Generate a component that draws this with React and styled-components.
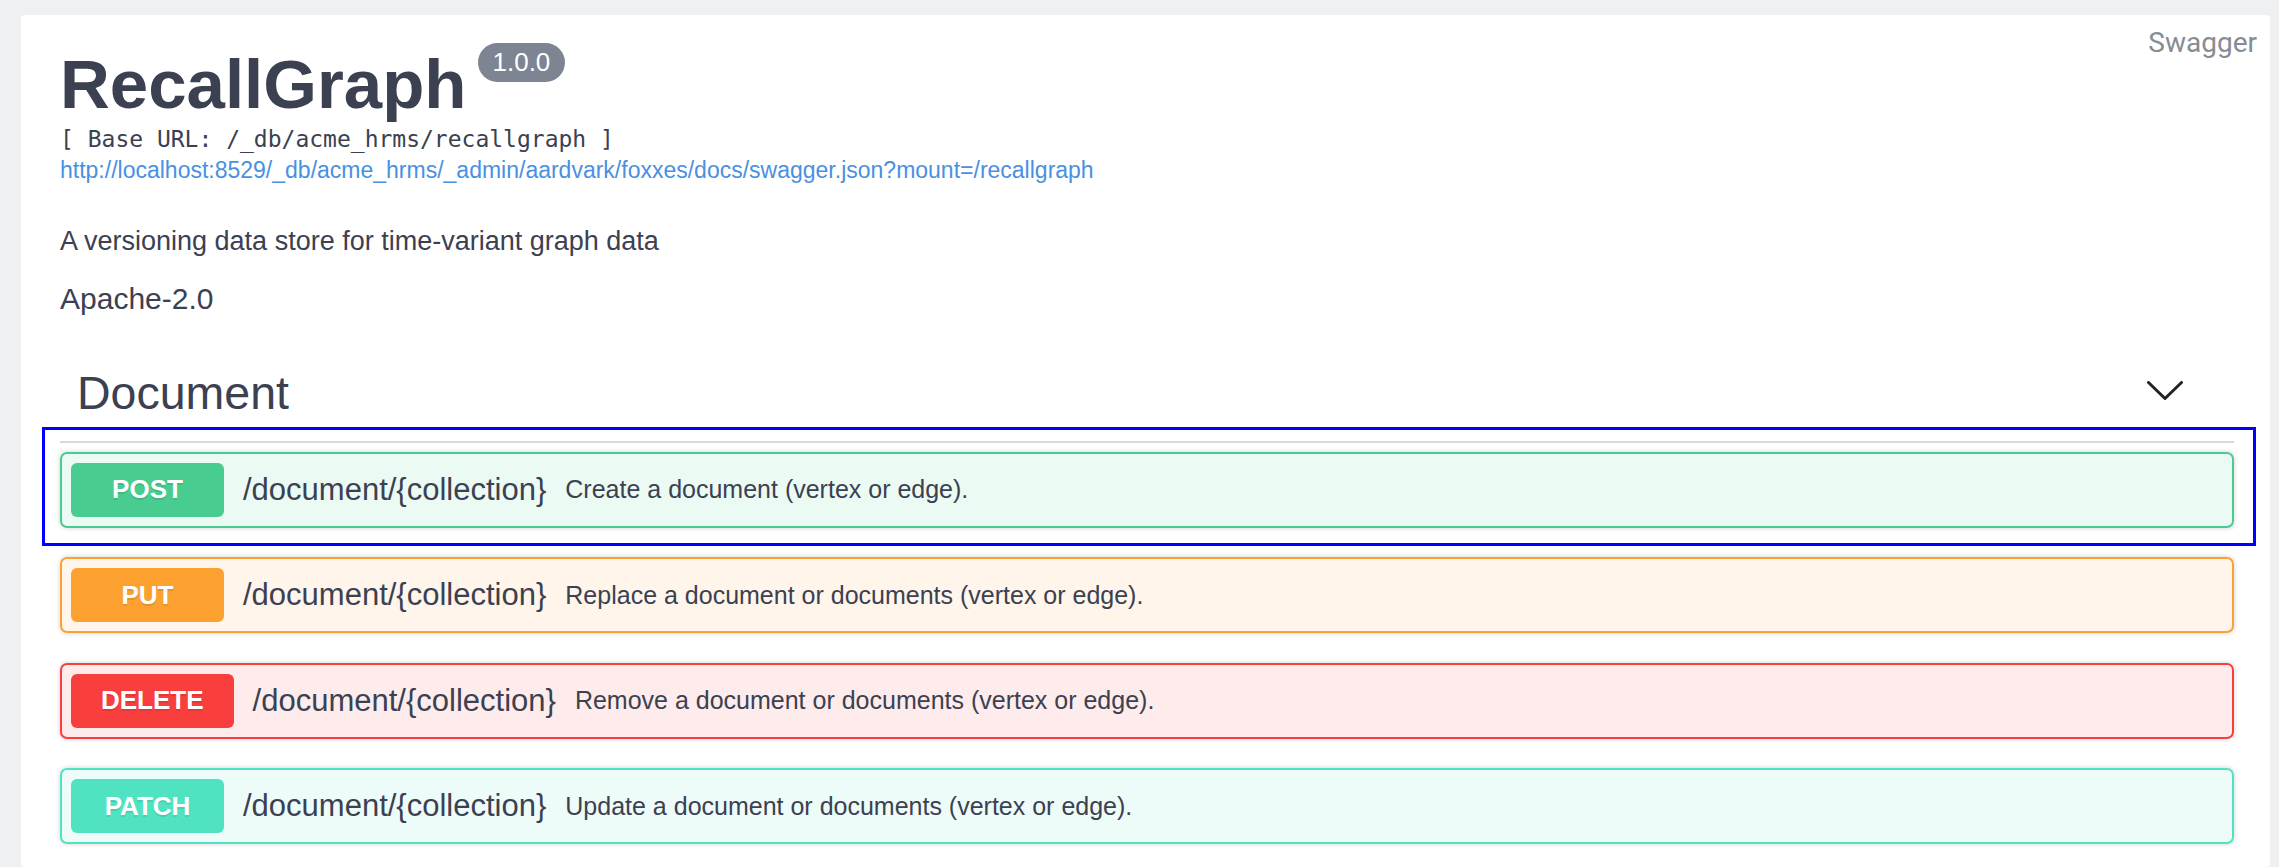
import React from 'react';
import styled, {createGlobalStyle} from 'styled-components';

const GlobalStyle = createGlobalStyle`
    html, body {
        margin: 0;
        padding: 0;
        background: #eff0f2;
        overflow: hidden;
    }
    * {
        box-sizing: border-box;
    }
`;

const ops = [
    {method: 'POST', color: '#49cc90', path: '/document/{collection}', summary: 'Create a document (vertex or edge).'},
    {method: 'PUT', color: '#fca130', path: '/document/{collection}', summary: 'Replace a document or documents (vertex or edge).'},
    {method: 'DELETE', color: '#f93e3e', path: '/document/{collection}', summary: 'Remove a document or documents (vertex or edge).'},
    {method: 'PATCH', color: '#50e3c2', path: '/document/{collection}', summary: 'Update a document or documents (vertex or edge).'},
];

const Page = styled.div`
    padding: 15px 9px 0 21px;
    font-family: "Liberation Sans", Arial, sans-serif;
    color: #3b4151;
`;

const Card = styled.div`
    background: #fff;
    border-radius: 4px;
    min-height: calc(100vh - 15px);
    padding: 0 36px 0 39px;
`;

const Header = styled.div`
    display: flex;
    justify-content: space-between;
    align-items: flex-start;
`;

const Info = styled.div`
    margin-top: 28px;
    display: flex;
    flex-direction: column;
`;

const TitleRow = styled.div`
    display: flex;
    align-items: flex-start;
`;

const Title = styled.h2`
    margin: 7px 0 0;
    font-size: 69px;
    line-height: 69px;
    font-weight: 700;
    color: #3b4151;
`;

const Version = styled.span`
    margin-left: 11px;
    height: 39px;
    line-height: 39px;
    padding: 0 15px;
    border-radius: 40px;
    background: #7d8492;
    color: #fff;
    font-size: 26px;
`;

const BaseUrl = styled.pre`
    margin: 7px 0 0;
    font-family: "DejaVu Sans Mono", monospace;
    font-size: 23px;
    line-height: 26px;
    color: #3b4151;
`;

const SpecLink = styled.a`
    margin-top: 3.5px;
    font-size: 23px;
    line-height: 28px;
    color: #4990e2;
    text-decoration: none;
`;

const Description = styled.p`
    margin: 42.5px 0 0;
    font-size: 27px;
    line-height: 30px;
`;

const License = styled.div`
    margin-top: 25.6px;
    font-size: 30px;
    line-height: 34px;
`;

const Brand = styled.div`
    margin: 14.4px -23px 0 0;
    font-family: Roboto, sans-serif;
    font-size: 28px;
    line-height: 28px;
    color: #868c94;
`;

const TagHeader = styled.div`
    margin-top: 51.8px;
    display: flex;
    align-items: center;
    justify-content: space-between;
    padding: 0 51px 21.6px 17px;
    border-bottom: 2px solid #d6d8dc;
`;

const TagName = styled.h3`
    margin: 0;
    font-size: 46.5px;
    line-height: 52px;
    font-weight: 400;
    color: #3b4151;
`;

const Chevron = styled.svg`
    margin-bottom: 5px;
`;

const OpList = styled.div`
    position: relative;
    margin-top: 9px;
`;

// the blue selection frame drawn over the first operation
const Highlight = styled.div`
    position: absolute;
    top: -25px;
    left: -18px;
    right: -22px;
    height: 119px;
    border: 3px solid #0000ff;
    pointer-events: none;
`;

const OpBlock = styled.div`
    display: flex;
    align-items: center;
    height: 76px;
    padding: 9px;
    margin-bottom: 29.5px;
    border: 2px solid ${props => props.$color};
    background: ${props => props.$color}1a;
    border-radius: 7px;
    box-shadow: 0 0 5px rgba(0, 0, 0, .19);
`;

const Method = styled.span`
    min-width: 153px;
    height: 54px;
    padding: 0 30px;
    display: flex;
    align-items: center;
    justify-content: center;
    border-radius: 6px;
    background: ${props => props.$color};
    color: #fff;
    font-size: 26px;
    font-weight: 700;
    text-shadow: 0 2px 0 rgba(0, 0, 0, .1);
`;

const OpPath = styled.span`
    padding: 0 19px;
    font-size: 31px;
    line-height: 34px;
    color: #3b4151;
`;

const OpSummary = styled.span`
    font-size: 25px;
    line-height: 29px;
    color: #3b4151;
`;

export default function App() {
    return <Page>
        <GlobalStyle/>
        <Card>
            <Header>
                <Info>
                    <TitleRow>
                        <Title>RecallGraph</Title>
                        <Version>1.0.0</Version>
                    </TitleRow>
                    <BaseUrl>[ Base URL: /_db/acme_hrms/recallgraph ]</BaseUrl>
                    <SpecLink href="#">http://localhost:8529/_db/acme_hrms/_admin/aardvark/foxxes/docs/swagger.json?mount=/recallgraph</SpecLink>
                    <Description>A versioning data store for time-variant graph data</Description>
                    <License>Apache-2.0</License>
                </Info>
                <Brand>Swagger</Brand>
            </Header>
            <TagHeader>
                <TagName>Document</TagName>
                <Chevron width="36" height="19" viewBox="0 0 36 19">
                    <polyline points="1.5,1.5 18,17.5 34.5,1.5" fill="none" stroke="#222" strokeWidth="3" strokeLinecap="round" strokeLinejoin="round"/>
                </Chevron>
            </TagHeader>
            <OpList>
                <Highlight/>
                {ops.map(op =>
                    <OpBlock key={op.method} $color={op.color}>
                        <Method $color={op.color}>{op.method}</Method>
                        <OpPath>{op.path}</OpPath>
                        <OpSummary>{op.summary}</OpSummary>
                    </OpBlock>
                )}
            </OpList>
        </Card>
    </Page>
}
